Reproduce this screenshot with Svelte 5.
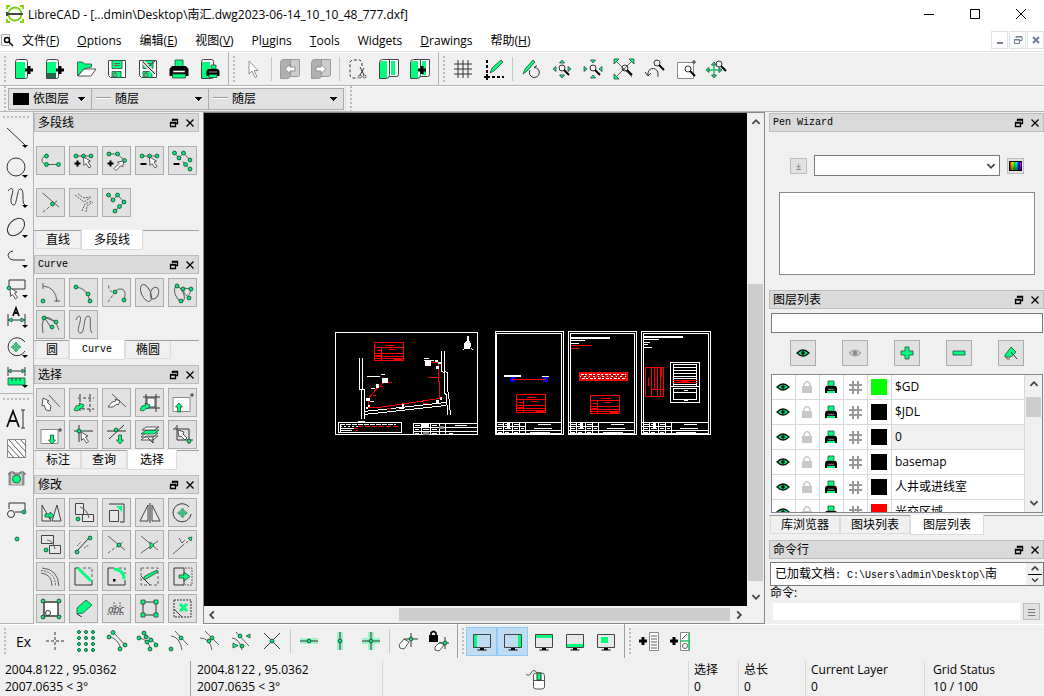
<script>
	const ln = (d, cls = "") => `<path class="ln ${cls}" d="${d}"/>`;
	const shape = (cls, d) => `<path class="${cls}" d="${d}"/>`;
	const dots = (...pts) =>
		pts.map(([x, y]) => `<circle class="dot" cx="${x}" cy="${y}" r="1.9"/>`).join("");
	const ring = (x, y, r, cls = "") =>
		`<circle class="ln ${cls}" cx="${x}" cy="${y}" r="${r}"/>`;
	const cursor = (x, y) => shape("wh", `M${x} ${y}l7 4-2.5 1 3 4.500-2 1.500-3-4.500-2 2z`);
	const cursorUp = (x, y) => shape("wh", `M${x} ${y}l-1.500 6-1.500-1.500-5 5-2-2 5-5-1.500-1.500z`);
	const plus = (x, y, r = 3) => ln(`M${x - r} ${y}h${r * 2}M${x} ${y - r}v${r * 2}`, r > 3 ? "bold" : "thick");
	const minus = (x, y) => ln(`M${x - 3} ${y}h6`, "thick");
	const arrowUp = (x, y) => shape("gr", `M${x} ${y}l3.500 4h-2v5h-3v-5h-2z`);
	const arrowDown = (x, y) => shape("gr", `M${x} ${y}l3.500-4h-2v-5h-3v5h-2z`);
	const moveCross = (x, y) =>
		shape("gm", `M${x} ${y - 5}l2 2.500h-1.200v1.700h1.700v-1.200l2.500 2-2.500 2v-1.200h-1.700v1.700h1.200l-2 2.500-2-2.500h1.200v-1.700h-1.700v1.200l-2.500-2 2.500-2v1.200h1.700v-1.700h-1.200z`);
	const lens = (x, y) => ring(x, y, 3, "dk") + ln(`M${x + 2} ${y + 2}l5 5`, "thick");
	const monitor = (bar) =>
		shape("scr", "M1.500 3.500h17v13h-17z") + bar + shape("bk", "M8 17h4v1.500h2.500v1h-9v-1h2.500z");
	const sheet = shape("doc", "M1.500 2.500q0-2 2-2h8q2 0 2 2v15q0 2-2 2h-10z");
	const floppy =
		shape("doc", "M1.500 1.500h17v17h-15l-2-2z") +
		shape("gr", "M5 1.500h10v8h-10z") +
		ln("M7 4.500h6M7 6.500h6") +
		shape("gr", "M5 12.500h9v6h-9z") +
		shape("doc", "M7 14h2v4h-2z");
	const pages =
		shape("doc", "M8 2.500q0-2 2-2h9.500v15q0 2-2 2h-9.500z") +
		shape("gf", "M12 2h4v14h-4z") +
		shape("doc", "M.500 4q0-3.500 3-3.500h7v15q0 4-3 4h-7z") +
		shape("gf", "M1 4q0-2 2-2h5v17h-7z");
	const greyPages = (arrow) =>
		shape("off2", "M8 2.500q0-2 2-2h9.500v15q0 2-2 2h-9.500z") +
		shape("off", "M.500 4q0-3.500 3-3.500h7v15q0 4-3 4h-7z") +
		shape("wh lt", arrow);
	const zigzag = [[1.5, 2], [6, 7], [10.5, 2], [17, 9], [12.5, 13.5]];

	const icons = {
		// file
		new: sheet + shape("gf", "M2 3h9v16h-9z") + plus(15, 11, 4),
		newTpl: sheet + shape("gf", "M2 3h9v12h-9z") + shape("mid", "M2 14h9v5h-9z") + plus(15, 11, 4),
		open: shape("gr", "M1.500 17v-14h5l2 2h7v3l-8 2z") + shape("wh", "M2 17l6-7h12l-5 7z"),
		save: floppy,
		saveAs: floppy + ln("M5 3l12 12", "halo2") + ln("M5 3l12 12", "dk") + ln("M11 7l6-5", "dk"),
		print: shape("gr", "M6 1h8v7h-8z") + shape("bk", "M3 7h14l2.500 3v7h-19v-7z") + shape("wh", "M4 11.500h12v2h-12z") + shape("gr", "M3.500 15h13v4h-13z"),
		preview: sheet + shape("gf", "M2 3h8v16h-8z") + shape("gr", "M11 6h5v4h-5z") + shape("bk", "M8 10h10l1.500 2v5h-13v-5z") + shape("wh", "M9 12.500h8v1h-8z") + shape("gr", "M9 15.500h8v3h-8z"),
		// edit
		pointer: shape("wh lt", "M6 2v13l3-3 3 6.500 2-1-3-6h4z"),
		undo: greyPages("M5 10l5-4.500v2.500h5v4h-5v2.500z"),
		redo: greyPages("M15 10l-5-4.500v2.500h-5v4h5v2.500z"),
		cut: ln("M14 7v-4l-2-2h-8l-2 2v14l2 2h6", "dk dash") + ln("M12 8l4 8M16 9l-4 7", "dk") + ring(12, 17.5, 1.5) + ring(16.5, 17.5, 1.5),
		copy: pages,
		paste: pages + plus(12, 11, 4),
		// view
		grid: ln("M5 1v18M10 1v18M15 1v18M1 5h18M1 10h18M1 15h18", "dk"),
		draft: ln("M3 1v15", "thick dash") + ln("M3 18h17", "thick dash") + plus(3, 18) + shape("gr", "M6 14l2-5 9-8 2 2-9 9z"),
		redraw: ln("M9 11a5 5 0 104-2.500l3-2", "dk") + shape("gr", "M2 15l2-5 8-9 2 2-8 9z"),
		zoomIn: lens(10, 9) + shape("gr", "M10 1l2.500 3h-5zM10 19l2.500-3h-5zM1 10l3-2.500v5zM19 10l-3-2.500v5z"),
		zoomOut: lens(10, 9) + shape("gr", "M10 4l2.500-3h-5zM10 16l2.500 3h-5zM4 10l-3-2.500v5zM16 10l3-2.500v5z"),
		zoomAuto: ln("M2 2l16 16M18 2l-16 16") + shape("gr", "M0 0h5l-5 5zM20 0v5l-5-5zM0 20v-5l5 5z") + lens(11, 9),
		zoomPrev: lens(12, 4) + ln("M3 17v-3a5 5 0 0110 1v3", "dk") + ln("M0 13l3 4 3-3", "dk"),
		zoomWin: shape("page", "M1.500 3.500h16v16h-16z") + lens(12, 10) + ln("M16 3h4M18 1v4", "dk"),
		zoomPan: ln("M7 4v14M0 11h14", "glm") + shape("gr", "M7 3l2.500 3h-5zM7 19l2.500-3h-5zM-1 11l3-2.500v5zM15 11l-3-2.500v5z") + lens(12, 5),
		// drawing tools
		line: ln("M0 1l19 18", "dk"),
		circle: ring(9, 10, 9, "dk"),
		spline: ln("M1 4c4-5 6-2 4 4s-1 10 2 10 3-18 7-16 0 14 4 16", "dk"),
		ellipse: `<ellipse class="ln dk" cx="9" cy="10" rx="10" ry="7" transform="rotate(-45 9 10)"/>`,
		polyline: ln("M6 4c-7 1-6 8 0 9h12", "dk"),
		select: ln("M2 12v-9h16v9h-13", "dk") + cursor(3, 11) + dots([2, 11]),
		dimension: ln("M1 7v12M18 7v12M1 13h17", "dk") + shape("gr", "M1 13l4-2v4zM18 13l-4-2v4z") + ln("M6 9l3-8 3 8M7 6h4", "dk2"),
		modify: ln("M17 4a9 9 0 10 1 10", "dk") + moveCross(9, 10) + ln("M15 2l3 3", "dk"),
		measure: ln("M1 0v9M18 0v9M1 4h17", "dk") + shape("gr", "M1 4l3-2v4zM18 4l-3-2v4zM1 11h17v7h-17z") + ln("M5 11v3M9 11v3M13 11v3", "dk"),
		text: ln("M0 18l6-16 6 16M3 12h7", "dk2") + ln("M14 1h4M14 19h4M16 1v18", "dk"),
		hatch: shape("page", "M.5 .500h18v18h-18z") + ln("M1 12l6 7M1 6l12 13M2 1l16 18M8 1l11 12M14 1l5 6"),
		camera: shape("off2", "M2 4h15v12h-15z") + ln("M1 5h2v-2h4v2h6v-2h4v2h2M3 5v11M16 5v11") + `<circle class="gr" cx="9.500" cy="10" r="4"/>`,
		block: ln("M2 10v-6h16v9h-10", "dk") + ring(4, 15, 3.5, "dk") + dots([17, 13]),
		point: dots([10, 10]),
		// polylines
		poly: ln("M5.500 5c-6 0-6 8 0 8.500h12") + dots([5.5, 5], [5.5, 13.5], [17.5, 13.5]),
		polyAdd: ln("M2 5h15") + dots([2, 5], [9.5, 5], [17, 5]) + plus(3.5, 12.5) + cursor(9.5, 6),
		polyAppend: ln("M2 3h8.500l7 6.500") + dots([2, 3], [10.5, 3], [17.5, 9.5]) + plus(3.5, 12.5) + cursorUp(17, 10),
		polyDel: ln("M2 5h15") + dots([2, 5], [9.5, 5], [17, 5]) + minus(3.5, 13) + cursor(9.5, 6),
		polyDelBetween: ln("M1.500 2l4.500 5 4.500-5 6.500 7") + ln("M6 7l6.500 6.500 4.500 4.500", "dash") + dots(...zigzag, [17, 18]) + minus(3.5, 13),
		polyTrim: ln("M1.500 0l16.500 14") + ln("M2 19l15-12", "dash") + dots([11.5, 11]),
		polyEq: ln("M1 2l9 7 6-4M4 1l6 4 7-1M8 18l3-7 7-3M12 19l1-6 6-4", "dash2"),
		polySegs: ln("M1.500 2l4.500 5 4.500-5 6.500 7-4.500 4.500L8 18") + dots(...zigzag, [8, 18]),
		// curves
		arc: ln("M2 0v6M2 3q13 1 14 16M13 18h6") + dots([2, 18]),
		arc3: ln("M2 4q11 1 14 14") + dots([2, 4], [14, 11], [16, 18]),
		arcTangent: ln("M8 9q3-4 7-3 5 2 2 11") + ln("M1 19l7-10c-6 0-7-3-6-8", "dash") + dots([8, 9], [17, 17]),
		ellipseArc: `<ellipse class="ln" cx="6" cy="10" rx="4.500" ry="9" transform="rotate(-25 6 10)"/><ellipse class="ln" cx="14.500" cy="10" rx="4" ry="6" transform="rotate(20 14 10)"/>`,
		splinePts: `<ellipse class="ln" cx="6" cy="11" rx="4" ry="8" transform="rotate(-25 6 10)"/>` + ln("M10 5c1 8 6 12 8 1l-8-1") + dots([4, 3], [10, 6], [18, 6], [16, 15], [8, 18]),
		splineFit: ln("M3 2q-3 8-1 16M3 2q11 0 15 13M3 2l8 12M3 2l12 5") + dots([3, 3], [15, 7], [11, 12]),
		freehand: ln("M2 5c2-6 6-5 4 2s-3 11 1 11 2-17 7-17 0 12 4 17"),
		// selection
		deselect: ln("M8 2l11 12") + shape("wh", "M2 5l6 3-2 1 4 4-1 5-4-1-2-5-2 1z"),
		selWin: ln("M4 5h16M6 1v17M16 1v18M3 16h17", "dk dash") + shape("gr", "M0 17l2-4 4-1-1-2 5 2-2 4-1-1-4 3z"),
		selContour: ln("M5 1l14 13") + shape("wh", "M1 14l4-5 4-1-1-2 5 2-2 4-1-1-4 3z"),
		selCross: ln("M3 4h17M6 1v15M16 1v18M3 15h17", "dk") + shape("doc", "M7 5h8v9h-8z") + shape("gr", "M0 17l2-4 4-1-1-2 5 2-2 4-1-1-4 3z"),
		selUp: shape("page", "M0 4.500h17v14h-17z") + arrowUp(6, 10) + ln("M17 2h4M19 0v4", "dk"),
		selDown: shape("page", "M0 4.500h17v14h-17z") + arrowDown(11, 19) + ln("M17 5h4M19 3v4", "dk"),
		selPoint: ln("M5 0v17M0 6h19", "dk") + dots([5, 6]) + cursor(7, 7),
		selLines: ln("M17 0l-15 14M0 6h19", "dk") + dots([9, 5]) + arrowDown(13, 19),
		layers: shape("wh", "M1 15l5-4h12l-5 4zM1 12l5-4h12l-5 4z") + shape("gr", "M1 9l5-4h13l-5 4z") + shape("wh", "M2 5l4-3h13l-5 3z") + ln("M8 13l5 5M13 12v6", "dk"),
		selAll: ln("M4 0v15h16M16 19v-15H0", "dk") + ln("M2 2l14 14") + shape("wh", "M5 5l6 2-1 2 4 4-2 2-4-4-2 1z") + dots([16, 16]),
		// modify
		move: shape("wh0", "M1 2v16h9zM16 2l4 16h-9z") + shape("gr", "M4 11h5v-2l4 3.500-4 3.500v-2h-5z"),
		copyMove: shape("wh0", "M1.500 .500h8v11h-8zM8.500 11.500h11v7h-11z") + ln("M6 4q7 2 9 11") + dots([4, 16]),
		scale: shape("wh0", "M2.500 7.500h9v11h-9z") + ln("M2 1h15v18h-4", "dk") + shape("gf", "M9 3h6v6z"),
		mirror: shape("wh0", "M8 2v16h-8zM12 2l8 16h-8z") + ln("M10 0v20", "dk"),
		rotate: ln("M16 4a9 9 0 10 2 7", "dk") + moveCross(9.5, 10),
		moveRotate: shape("wh0", "M.500 .500h12v8h-12zM8.500 10.500h11v8h-11z") + ln("M6 5q6 0 8 9") + dots([5, 15]),
		stretch: ln("M3 16l12-13", "dk") + dots([3, 17], [16, 3]) + ln("M3 11l4-4M10 13l5-3", "dash2"),
		trim: ln("M1 1l17 14") + ln("M1 18l15-11", "dash") + dots([12, 10]),
		trim2: ln("M1 1l17 14M1 18l17-12") + shape("gr", "M10 7l4 3-4 4z"),
		lengthen: ln("M0 19l9-8") + ln("M9 11l9-7", "dash") + ln("M6 3l3 5 3-3") + shape("gr", "M19 2l-1 4-3-3z"),
		offset: ln("M1 1q16 1 17 18M0 6q11 1 11 13", "") + ln("M0 3.500q14 1 14.500 15", "dash2"),
		bevel: ln("M1 1v17h17v-5M1 1h4", "dk") + ln("M9 1h9v9", "dash") + ln("M4 1l13 13", "glt"),
		round: ln("M1 1v17h17v-5M1 1h6", "dk") + ln("M7 2q10 1 10 10", "glt") + shape("bk", "M6 12h2.500v2.500h-2.500z") + ln("M12 1h6v6", "dash"),
		properties: ln("M1 1v17h17M1 1h17v17", "dash") + ln("M1 9l9 9", "dk") + shape("gr", "M3 12l2-3 12-6 1 2-12 7z"),
		attributes: ln("M1 1h10v17h-10z", "dk") + ln("M12 1h7v17h-7", "dash2") + shape("gr", "M6 8h5v-3l6 4.500-6 4.500v-3h-5z"),
		explodeBlk: shape("doc", "M3 3h14v14h-14z") + ln("M0 3h20M0 17h20M3 0v20M17 0v20", "dk") + ring(7, 14, 2.5, "dk") + dots([2, 2], [18, 2], [2, 18], [18, 18]),
		explodeText: shape("gr", "M3 15v-6l9-8 6 5-9 8z") + ln("M3 15l5 3", "dk"),
		textEdit: `<text class="abc" x="1" y="14">abc</text>` + ln("M0 15h18M7 3v13M13 3v13", "dash2"),
		explode: ln("M3 3h13v13h-13z", "dk") + shape("gr", "M1 1h4v4h-4zM14 1h4v4h-4zM1 14h4v4h-4zM14 14h4v4h-4z"),
		delete: ln("M1 1h17v17h-17z", "dk dash2") + ln("M1 10l8 8", "dk") + ln("M7 5l7 7M14 5l-7 7", "glt"),
		// snapping
		free: ln("M10 1v18M1 10h18", "dk dash"),
		snapGrid: [1, 7, 13, 19].flatMap((y) => [3, 10, 17].map((x) => `<circle class="dot" cx="${x}" cy="${y}" r="1.500"/>`)).join(""),
		snapEnd: ln("M2 6q9 1 12 12M6 1l12 13") + dots([2, 6], [6, 1.5], [18, 14], [13, 18]),
		snapEntity: ln("M1 7q9 1 12 12M5 1l14 13") + dots([1, 7], [6, 2], [8, 6], [13, 9], [9, 11], [18, 14], [12, 18]),
		snapCenter: ln("M2 5q9 1 11 14M6 0l13 14") + dots([2, 18], [12, 7]),
		snapMiddle: ln("M0 7q10 0 12 12M5 0l14 14") + dots([12, 7], [9, 10]),
		snapDist: ln("M1 7q8 1 10 12M5 1l13 14") + dots([9, 5], [11, 15]) + shape("gr", "M19 3v4l-4-2zM2 12v5l5-2.500z"),
		snapInt: ln("M2 2l16 16M18 2l-16 16", "dk") + dots([10, 10]),
		restrH: ln("M1 10h18", "halo") + ln("M1 10h18", "dk") + dots([10, 10]),
		restrV: ln("M10 1v18", "halo") + ln("M10 1v18", "dk") + dots([10, 10]),
		restrO: ln("M1 10h18M10 1v18", "halo") + ln("M1 10h18M10 1v18", "dk") + dots([10, 10]),
		relZero: shape("wh", "M1 14l5-6 5 3-5 7-4-1z") + ln("M13 2v14M6 8h14", "dk") + dots([13, 8]),
		lockZero: shape("bk", "M0 4h9v7h-9z") + ln("M2 4v-2q2.500-3 5 0v2", "dk2") + shape("wh", "M6 16l5-5 4 3-5 6-4-1z") + ln("M16 6v12M10 12h10", "dk") + dots([16, 12]),
		dockLeft: monitor(shape("gf", "M2 4h3v12h-3z")),
		dockRight: monitor(shape("gf", "M15 4h3v12h-3z")),
		dockTop: monitor(shape("gf", "M2 4h16v3h-16z")),
		dockBottom: monitor(shape("gf", "M2 13h16v3h-16z")),
		dockFloat: monitor(shape("gf", "M5 6h7v6h-7z")),
		addMenu: plus(4, 10, 4) + shape("page", "M10.500 1.500h9v18h-9z") + ln("M12 5h6M12 8h6M12 11h6M12 14h6M12 17h6"),
		addTool: plus(4, 10, 4) + shape("page", "M10.500 1.500h9v18h-9z") + ln("M11 10h8M19 2v17", "glm") + ln("M12 8l5-5") + ring(15, 15, 2.5),
		// layers
		eye: shape("eye", "M4 10q6-6 12 0-6 6-12 0z") + `<circle class="bk" cx="10" cy="10" r="1.800"/>`,
		eyeOff: shape("eyeOff", "M4 10q6-6 12 0-6 6-12 0z") + `<circle class="off3" cx="10" cy="10" r="2.200"/>`,
		add: shape("gr", "M8 4h4v4h4v4h-4v4h-4v-4h-4v-4h4z"),
		remove: shape("gr", "M4 8h12v4h-12z"),
		layerEdit: shape("gr", "M4 12l6-8 5 5-5 5h-6z") + ln("M5 14q0 3 4 2") + ln("M10 9l6 7", "dk"),
		lock: shape("off4", "M5 9h10v7h-10z") + ln("M7 9v-2q3-5 6 0v2", "ltl"),
		smallPrint: shape("gr", "M7 4h6v5h-6z") + shape("bk", "M5 9h10l1 2v5h-12v-5z") + shape("wh0", "M7 12h6v1h-6z") + shape("gf", "M6 14h8v2h-8z"),
		hash: ln("M8 4v13M13 4v13M4 8h13M4 13h13", "hash"),
	};

	const fileTools = ["new", "newTpl", "open", "save", "saveAs", "print", "preview"];
	const editTools = ["pointer", "|", "undo", "redo", "|", "cut", "copy", "paste"];
	const viewTools = ["grid", "draft", "|", "redraw", "zoomIn", "zoomOut", "zoomAuto", "zoomPrev", "zoomWin", "zoomPan"];
	const snapTools = ["ex", "free", "snapGrid", "snapEnd", "snapEntity", "snapCenter", "snapMiddle", "snapDist", "snapInt", "|", "restrH", "restrV", "restrO", "|", "relZero", "lockZero"];
	const dockTools = ["dockLeft", "dockRight", "dockTop", "dockBottom", "dockFloat"];
	const creatorTools = ["addMenu", "addTool"];
	const drawTools = ["line", "circle", "spline", "ellipse", "polyline", "select", "dimension", "modify", "measure"];
	const otherTools = ["text", "hatch", "camera", "block", "point"];

	const menus = [
		["文件(", "F", ")"],
		["", "O", "ptions"],
		["编辑(", "E", ")"],
		["视图(", "V", ")"],
		["Pl", "u", "gins"],
		["", "T", "ools"],
		["Widgets", "", ""],
		["", "D", "rawings"],
		["帮助(", "H", ")"],
	];

	const docks = [
		{
			title: "多段线",
			roomy: true,
			tools: ["poly", "polyAdd", "polyAppend", "polyDel", "polyDelBetween", "polyTrim", "polyEq", "polySegs"],
			tabs: ["直线", "多段线"],
			active: "多段线",
		},
		{
			title: "Curve",
			tools: ["arc", "arc3", "arcTangent", "ellipseArc", "splinePts", "splineFit", "freehand"],
			tabs: ["圆", "Curve", "椭圆"],
			active: "Curve",
		},
		{
			title: "选择",
			tools: ["deselect", "selWin", "selContour", "selCross", "selUp", "selDown", "selPoint", "selLines", "layers", "selAll"],
			tabs: ["标注", "查询", "选择"],
			active: "选择",
		},
		{
			title: "修改",
			tools: ["move", "copyMove", "scale", "mirror", "rotate", "moveRotate", "stretch", "trim", "trim2", "lengthen", "offset", "bevel", "round", "properties", "attributes", "explodeBlk", "explodeText", "textEdit", "explode", "delete"],
			tabs: [],
		},
	];

	const layers = [
		{ name: "$GD", color: "#00ff00" },
		{ name: "$JDL", color: "#000000" },
		{ name: "0", color: "#000000", alt: true },
		{ name: "basemap", color: "#000000" },
		{ name: "人井或进线室", color: "#000000" },
		{ name: "光交区域", color: "#ff0000" },
	];

	let pressed = $state(["dockLeft", "dockRight"]);
	let filter = $state("");
	let command = $state("");

	const isLatin = (s) => /^[\x20-\x7e]+$/.test(s);

	function toggle(name) {
		if (!dockTools.includes(name)) return;
		pressed = pressed.includes(name) ? pressed.filter((n) => n !== name) : [...pressed, name];
	}
</script>

{#snippet icon(name)}
	<svg class="icon" viewBox="0 0 20 20" aria-hidden="true">{@html icons[name]}</svg>
{/snippet}

{#snippet toolbar(tools)}
	<div class="toolbar" role="toolbar">
		<span class="grip"></span>
		{#each tools as name}
			{#if name === "|"}
				<span class="sep"></span>
			{:else}
				<button
					class="tool"
					class:pressed={pressed.includes(name)}
					aria-label={name}
					onclick={() => toggle(name)}
				>
					{#if name === "ex"}Ex{:else}{@render icon(name)}{/if}
				</button>
			{/if}
		{/each}
	</div>
{/snippet}

{#snippet dockTitle(title)}
	<header class="dock-title">
		<h2 class:latin={isLatin(title)}>{title}</h2>
		<button aria-label="Float">
			<svg viewBox="0 0 10 10"><path d="M3.500 3V1.500h5v4H7M3 2h6M1.500 4.500h5v4h-5zM1 5h6" /></svg>
		</button>
		<button aria-label="Close">
			<svg viewBox="0 0 10 10"><path d="M1.500 1.500l7 7M8.500 1.500l-7 7" /></svg>
		</button>
	</header>
{/snippet}

{#snippet tabBar(tabs, active)}
	<div class="tabs" role="tablist">
		{#each tabs as tab}
			<button role="tab" aria-selected={tab === active} class:latin={isLatin(tab)}>{tab}</button>
		{/each}
	</div>
{/snippet}

{#snippet chevron(dir)}
	<svg class="chevron {dir}" viewBox="0 0 10 10"><path d="M2 6.500l3-3 3 3" /></svg>
{/snippet}

{#snippet redTable(x, y)}
	<g class="red" transform="translate({x} {y})">
		<path d="M.5 .5h29v18h-29zM0 5.500h30M0 11.500h30M0 14.500h30M0 16.500h30M7.500 5v14M11 3.500h9" />
		<path d="M3 8.500h4M15 7.500h6M2 13.500h5M20 17.500h8" />
	</g>
{/snippet}

{#snippet titleBlock(w)}
	<path d="M1 91.500h{w}M1 95.500h30M1 99.500h{w}M1 102.500h{w}M8.500 91v12M17.500 91v12M24.500 91v12M30.500 91v12" />
	<path d="M3 93.500h5M10 93.500h5M19 93.500h5M3 97.500h4M10 97.500h6M19 97.500h4M26 97.500h3M3 101.500h4M10 101.500h4M19 101.500h4M43 93.500h13M39 97.500h18M35 101.500h20" />
	<path class="solid" d="M12 92h3v6h-3z" />
{/snippet}

<div class="app">
	<header class="titlebar">
		<svg class="logo" viewBox="0 0 18 18" aria-hidden="true">
			<circle cx="9" cy="9" r="6.500" />
			<path class="corner" d="M1 4V1h3M14 1h3v3M17 14v3h-3M4 17H1v-3" />
			<path d="M0 9h17M1 7v4" />
		</svg>
		<h1>LibreCAD - [...dmin\Desktop\南汇.dwg2023-06-14_10_10_48_777.dxf]</h1>
		<div class="window-buttons">
			<button aria-label="Minimize"><svg viewBox="0 0 12 12"><path d="M1 6.500h10" /></svg></button>
			<button aria-label="Maximize"><svg viewBox="0 0 12 12"><path d="M1.500 1.500h9v9h-9z" /></svg></button>
			<button aria-label="Close"><svg viewBox="0 0 12 12"><path d="M1 1l10 10M11 1L1 11" /></svg></button>
		</div>
	</header>

	<nav class="menubar">
		<svg class="file-icon" viewBox="0 0 14 14" aria-hidden="true">
			<path class="sheet" d="M1.500 1.500h8v11h-8z" />
			<circle cx="7" cy="7" r="2.500" />
			<path d="M9 9l4 4" />
		</svg>
		{#each menus as [before, key, after]}
			<button>{before}<u>{key}</u>{after}</button>
		{/each}
		<div class="mdi">
			<button aria-label="Minimize"><svg viewBox="0 0 10 10"><path class="fat" d="M2 8h6" /></svg></button>
			<button aria-label="Restore"><svg viewBox="0 0 10 10"><path d="M3 3V1.500h6v4H7M3 2h6M1.500 4.500h5v4h-5zM1 5h6" /></svg></button>
			<button aria-label="Close"><svg viewBox="0 0 10 10"><path class="fat" d="M2 2l6 6M8 2l-6 6" /></svg></button>
		</div>
	</nav>

	<div class="toolbars">
		{@render toolbar(fileTools)}
		{@render toolbar(editTools)}
		{@render toolbar(viewTools)}
	</div>

	<div class="toolbars pens">
		<span class="grip"></span>
		<label class="pen color">
			<span class="swatch"></span>
			<select aria-label="Color"><option>依图层</option></select>
		</label>
		<label class="pen width">
			<span class="stroke"></span>
			<select aria-label="Width"><option>随层</option></select>
		</label>
		<label class="pen type">
			<span class="stroke"></span>
			<select aria-label="Line type"><option>随层</option></select>
		</label>
		<span class="edge"></span>
		<span class="grip"></span>
	</div>

	<main>
		<aside class="palette">
			<div class="group">
				<span class="grip"></span>
				{#each drawTools as name}
					<button class="drop" aria-label={name}>{@render icon(name)}</button>
				{/each}
			</div>
			<div class="group">
				<span class="grip"></span>
				{#each otherTools as name}
					<button aria-label={name}>{@render icon(name)}</button>
				{/each}
			</div>
		</aside>

		<aside class="left">
			{#each docks as dock}
				<section class="dock">
					{@render dockTitle(dock.title)}
					<div class="tool-grid" class:roomy={dock.roomy}>
						{#each dock.tools as name}
							<button class="boxed" aria-label={name}>{@render icon(name)}</button>
						{/each}
					</div>
					{#if dock.tabs.length}
						{@render tabBar(dock.tabs, dock.active)}
					{/if}
				</section>
			{/each}
		</aside>

		<section class="view">
			<svg class="drawing" viewBox="0 0 543 492" preserveAspectRatio="xMinYMin" shape-rendering="crispEdges">
				<g transform="translate(131 219)">
					<path d="M.5 .5h142v102h-142z" />
					{@render redTable(39, 10)}
					<path class="solid" d="M132 4h2v4l2 4v5h-7v-5l3-4zM127 18l3-3v2zM138 18l-3-3v2z" />
					<path d="M24.500 26v31l2 1v29M27.500 26v31l2 1v29" />
					<path d="M106.500 19v20l3 2v20l2 2 1 20M109.500 19v20l3 2v18l1 2 2 22" />
					<path d="M29 79.500l82-9M29 82.500l82-9" />
					<path class="red" d="M57 50.500h-8l-8 7-7.500 9v9h10l61-9v-17h-1v-19h-8M94 45.500h9M44 54.500h4M38 63.500h3M52 76.500h4M88 71.500h4" />
					<path class="solid" d="M47 46h6v5h-6zM90 29h6v5h-6zM41 52h3v4h-3zM31 66h4v3h-4zM33 73h2v2h-2zM31 75h2v2h-2zM64 75h5v2h-5zM67 72h2v3h-2zM101 68h3v3h-3zM105 65h2v3h-2zM100 28h3v2h-3zM103 30h3v2h-3zM101 34h3v3h-3zM23 89h7v1h-7z" />
					<path d="M32 44.500h13M46 42.500h4M89 26.500h5M89 28.500h10M36 56.500h4M35 69.500h4" />
					<path d="M3.500 90.500h63v10h-63zM5 96.500h14M5 98.500h12M5.500 92v8" />
					<path stroke-dasharray="5 1" d="M5 92.500h56" />
					<path stroke-dasharray="2 2" d="M5 94.500h20" />
					<path class="red" stroke-dasharray="5 2" d="M23 94.500h40M19 96.500h4M21 98.500h2" />
					<path d="M78.500 91v12M78 91.500h64M78 95.500h64M78 99.500h64M86.500 91v12M95.500 91v12M104.500 91v12M110.500 91v12" />
					<path d="M80 93.500h5M88 93.500h6M97 93.500h5M80 97.500h4M88 97.500h6M97 97.500h5M120 93.500h12M80 101.500h4M97 101.500h5M114 101.500h4" />
					<path class="solid" d="M87 92h7v3h-7z" />
					<path class="grey" d="M104 94h5v3h-5zM88 100h6v3h-6z" />
				</g>
				<g transform="translate(291 218)">
					<path d="M.5 .5h68v103h-68zM1.500 2.500h65v101h-65z" />
					<path d="M9 44.500h17M9 45.500h17M47 45.500h7" />
					<path class="blue" d="M15 46h5v5h-5zM48 46h5v5h-5z" />
					<path class="red" d="M17 48.500h34" />
					{@render redTable(21, 63)}
					{@render titleBlock(66)}
				</g>
				<g transform="translate(364 218)">
					<path d="M.5 .5h68v103h-68zM2.500 2.500h64v101h-64z" />
					<path class="solid" d="M3 6h39v2h-39z" />
					<path d="M3 9.500h14M3 12.500h8" />
					<path class="red" d="M3 14.500h21M3 17.500h8" />
					<path class="red strip" d="M11.500 41.500h48v8h-48z" />
					<path stroke-dasharray="3 1 2 2" d="M13 43.500h45M14 47.500h44" />
					<path stroke-dasharray="1 3 2 3" d="M12 45.500h46" />
					<path class="black" stroke-dasharray="2 4 1 3" d="M15 44.500h43M13 46.500h45" />
					{@render redTable(22, 64)}
					{@render titleBlock(66)}
				</g>
				<g transform="translate(437 218)">
					<path d="M.5 .5h69v103h-69zM2.500 2.500h65v101h-65z" />
					<path class="solid" d="M3 5h39v2h-39z" />
					<path d="M3 8.500h15M3 11.500h6M3 13.500h4M3 16.500h8" />
					<path class="red" d="M4.500 36.500h18v29h-18zM10.500 36v30M13.500 36v22M16.500 36v30M19.500 36v30M20.500 36v10M10 58.500h12M7.500 47v8" />
					<path d="M29.500 31.500h29v40h-29zM32.500 33v23M55.500 33v23M32 33.500h24M32 36.500h24M32 39.500h24M32 42.500h24M32 45.500h24M32 47.500h24M32 53.500h24M29 55.500h29M32.500 57.500h23v11h-23zM32 61.500h24M43 59.500h4M43 69.500h4" />
					<path class="red" d="M32 49.500h24M32 51.500h24M40 50.500h8" />
					{@render titleBlock(67)}
				</g>
			</svg>
			<div class="vscroll">
				{@render chevron("up")}
				<div class="track"><span class="thumb"></span></div>
				{@render chevron("down")}
			</div>
			<div class="hscroll">
				{@render chevron("prev")}
				<div class="track"><span class="thumb"></span></div>
				{@render chevron("next")}
			</div>
		</section>

		<aside class="right">
			<section class="dock pen-wizard">
				{@render dockTitle("Pen Wizard")}
				<div class="wizard-row">
					<button class="mini" aria-label="Add favourite">±</button>
					<div class="combo">
						<select aria-label="Pen colour"><option></option></select>
						{@render chevron("down")}
					</div>
					<button class="mini" aria-label="Pick colour"><span class="rainbow"></span></button>
				</div>
				<div class="favourites"></div>
			</section>

			<section class="dock layer-dock">
				{@render dockTitle("图层列表")}
				<input class="filter" aria-label="Filter layers" bind:value={filter} />
				<div class="layer-tools">
					{#each ["eye", "eyeOff", "add", "remove", "layerEdit"] as name}
						<button class="boxed" aria-label={name}>{@render icon(name)}</button>
					{/each}
				</div>
				<div class="layer-list">
					<div class="rows">
						<table>
							<tbody>
								{#each layers as layer}
									<tr>
										<td>{@render icon("eye")}</td>
										<td>{@render icon("lock")}</td>
										<td>{@render icon("smallPrint")}</td>
										<td>{@render icon("hash")}</td>
										<td><span class="chip" style="background: {layer.color}"></span></td>
										<td class="name" class:alt={layer.alt}>{layer.name}</td>
									</tr>
								{/each}
							</tbody>
						</table>
					</div>
					<div class="vscroll slim">
						{@render chevron("up")}
						<div class="track"><span class="thumb"></span></div>
						{@render chevron("down")}
					</div>
				</div>
				{@render tabBar(["库浏览器", "图块列表", "图层列表"], "图层列表")}
			</section>

			<section class="dock command">
				{@render dockTitle("命令行")}
				<div class="output">
					<p>已加载文档<span class="latin">: C:\Users\admin\Desktop\</span>南</p>
					<div class="steps">
						{@render chevron("up")}
						{@render chevron("down")}
					</div>
				</div>
				<label for="command">命令:</label>
				<div class="command-row">
					<input id="command" bind:value={command} />
					<button class="mini" aria-label="Options">☰</button>
				</div>
			</section>
		</aside>
	</main>

	<div class="toolbars bottom">
		{@render toolbar(snapTools)}
		{@render toolbar(dockTools)}
		{@render toolbar(creatorTools)}
	</div>

	<footer>
		<div class="coords">2004.8122 , 95.0362<br />2007.0635 &lt; 3°</div>
		<div class="coords">2004.8122 , 95.0362<br />2007.0635 &lt; 3°</div>
		<div class="mouse">
			<svg viewBox="0 0 20 22" aria-hidden="true">
				<path class="cable" d="M0 6q3 3 5-1 3-5 6 0" />
				<path class="body" d="M7.500 7q0-2 3-2h5q3 0 3 3v11q0 2-3 2h-5q-3 0-3-2zM7.500 12.500h11" />
				<path class="wheel" d="M11 5h4v7h-4z" />
			</svg>
		</div>
		<div class="cell narrow">选择<br />0</div>
		<div class="cell">总长<br />0</div>
		<div class="cell wide">Current Layer<br />0</div>
		<div class="cell last">Grid Status<br />10 / 100</div>
	</footer>
</div>

<style>
	:global(body) {
		background: #f0f0f0;
	}

	.app {
		--line: #b4b4b4;
		--ui: "Open Sans", "Noto Sans CJK SC", sans-serif;
		background: #f0f0f0;
		color: #000;
		display: flex;
		flex-direction: column;
		font: 12px/17px var(--ui);
		height: 100vh;
		min-height: 696px;
		overflow: hidden;
	}

	.app * {
		box-sizing: border-box;
	}

	button,
	select,
	input {
		background: none;
		border: 0;
		border-radius: 0;
		color: inherit;
		font: inherit;
		margin: 0;
		outline: 0;
		padding: 0;
	}

	h1,
	h2,
	p {
		font-size: 12px;
		font-weight: normal;
		margin: 0;
	}

	.latin {
		font-family: "Liberation Mono", monospace;
		font-size: 10px;
	}

	/* icons */
	svg {
		display: block;
		fill: none;
		stroke: #000;
	}

	.icon {
		flex: none;
		height: 20px;
		overflow: visible;
		stroke: none;
		width: 20px;
	}

	.icon :global(.ln) { fill: none; stroke: #606060; }
	.icon :global(.dk) { stroke: #333; }
	.icon :global(.dk2) { stroke: #111; stroke-width: 1.8; }
	.icon :global(.thick) { stroke: #000; stroke-width: 2; }
	.icon :global(.bold) { stroke: #000; stroke-width: 3; }
	.icon :global(.dash) { stroke-dasharray: 3 2; }
	.icon :global(.dash2) { stroke-dasharray: 2 1; }
	.icon :global(.glm) { stroke: #20c070; stroke-width: 1.5; }
	.icon :global(.glt) { stroke: #00ff7f; stroke-width: 3; }
	.icon :global(.halo) { stroke: #a0f5c8; stroke-width: 6; }
	.icon :global(.halo2) { stroke: #ddd; stroke-width: 4; }
	.icon :global(.ltl) { stroke: #c8c8c8; stroke-width: 1.5; }
	.icon :global(.hash) { stroke: #999; stroke-width: 2; }
	.icon :global(.dot) { fill: #00f07a; stroke: #1c5f40; }
	.icon :global(.gr) { fill: #00ff7f; stroke: #2a4a3a; stroke-width: 0.8; }
	.icon :global(.gm) { fill: #30d080; stroke: #2a8a5a; stroke-width: 0.6; }
	.icon :global(.gf) { fill: #00ff7f; }
	.icon :global(.bk) { fill: #000; }
	.icon :global(.mid) { fill: #28664a; }
	.icon :global(.doc) { fill: #fff; stroke: #444; }
	.icon :global(.wh) { fill: #fff; stroke: #444; stroke-width: 0.9; }
	.icon :global(.wh.lt) { stroke: #888; }
	.icon :global(.wh0) { fill: #e8e8e8; stroke: #444; }
	.icon :global(.page) { fill: #fff; stroke: #888; }
	.icon :global(.off) { fill: #b0b0b0; stroke: #999; }
	.icon :global(.off2) { fill: #ccc; stroke: #999; }
	.icon :global(.off3) { fill: #888; }
	.icon :global(.off4) { fill: #c8c8c8; }
	.icon :global(.scr) { fill: #e8e8e8; stroke: #444; }
	.icon :global(.eye) { fill: #00e878; stroke: #111; stroke-width: 1.2; }
	.icon :global(.eyeOff) { fill: #ccc; stroke: #999; }
	.icon :global(.abc) { fill: #444; font: italic 10px "Open Sans", sans-serif; }

	.pressed .icon :global(.scr) { fill: #c0dcf3; }

	.chevron {
		flex: none;
		height: 12px;
		stroke: #444;
		stroke-width: 1.5;
		width: 12px;
	}

	.chevron.down { transform: rotate(180deg); }
	.chevron.prev { transform: rotate(-90deg); }
	.chevron.next { transform: rotate(90deg); }

	/* title and menus */
	.titlebar {
		align-items: center;
		background: #fff;
		display: flex;
		flex: none;
		height: 28px;
		padding-left: 6px;
	}

	.logo {
		height: 18px;
		margin-right: 4px;
		stroke: #444;
		stroke-width: 1.8;
		width: 18px;
	}

	.logo circle,
	.logo .corner {
		stroke: #80d010;
	}

	.window-buttons {
		display: flex;
		margin-left: auto;
	}

	.window-buttons button {
		display: grid;
		height: 28px;
		place-items: center;
		width: 46px;
	}

	.window-buttons svg {
		height: 12px;
		width: 12px;
	}

	.menubar {
		align-items: center;
		background: #fff;
		border-bottom: 1px solid #e4e4e4;
		display: flex;
		flex: none;
		height: 24px;
	}

	.file-icon {
		height: 14px;
		stroke-width: 1.5;
		width: 14px;
	}

	.file-icon .sheet {
		stroke: #aaa;
		stroke-width: 1;
	}

	.menubar > button {
		padding: 1px 10px 0 8px;
	}

	.mdi {
		display: flex;
		gap: 1px;
		margin-left: auto;
	}

	.mdi button {
		border: 1px solid #e0e0e0;
		display: grid;
		height: 18px;
		place-items: center;
		width: 17px;
	}

	.mdi svg {
		height: 10px;
		stroke: #708090;
		width: 10px;
	}

	.fat {
		stroke-width: 2;
	}

	/* toolbars */
	.toolbars {
		border-bottom: 1px solid var(--line);
		box-shadow: inset 0 1px #fff;
		display: flex;
		flex: none;
		height: 34px;
	}

	.toolbar {
		align-items: center;
		border-right: 1px solid var(--line);
		display: flex;
		padding-right: 3px;
	}

	.toolbar:last-child {
		border-color: transparent;
	}

	.grip {
		background: radial-gradient(circle at 1px 1px, #bbb 1px, transparent 1px) 0 0 / 4px 4px;
		flex: none;
		height: 26px;
		margin: 0 1px 0 4px;
		width: 3px;
	}

	.tool {
		display: grid;
		font-size: 14px;
		height: 29px;
		place-items: center;
		width: 31px;
	}

	.pressed {
		background: #c0dcf3;
		border: 1px solid #90c8f6;
	}

	.sep {
		border-left: 1px solid #c8c8c8;
		height: 24px;
		margin: 0 2px 0 3px;
	}

	.pens {
		align-items: center;
		height: 26px;
	}

	.pen {
		align-items: center;
		background: #e1e1e1;
		border: 1px solid #adadad;
		display: flex;
		gap: 4px;
		height: 22px;
		margin-right: -1px;
		padding-left: 4px;
	}

	.pen.color { width: 84px; }
	.pen.width { width: 118px; }
	.pen.type { width: 136px; }

	.pen select {
		appearance: none;
		background-image: linear-gradient(to bottom left, #000 50%, transparent 50%),
			linear-gradient(to bottom right, #000 50%, transparent 50%);
		background-position: right 9px center, right 5px center;
		background-repeat: no-repeat;
		background-size: 4px 4px;
		flex: 1;
		min-width: 0;
	}

	.swatch {
		background: #000;
		height: 12px;
		width: 16px;
	}

	.stroke {
		border-top: 1px solid #fff;
		box-shadow: 0 -1px #999;
		width: 15px;
	}

	.edge {
		align-self: stretch;
		border-right: 1px solid #ddd;
		margin-left: 2px;
	}

	/* work area */
	main {
		display: flex;
		flex: 1;
		min-height: 0;
	}

	.palette {
		border-bottom: 1px solid var(--line);
		border-right: 1px solid var(--line);
		flex: none;
		width: 34px;
	}

	.group {
		border-bottom: 1px solid var(--line);
		padding-bottom: 1px;
	}

	.group + .group {
		border: 0;
	}

	.group .grip {
		display: block;
		height: 3px;
		margin: 4px 3px 3px;
		width: 27px;
	}

	.group button {
		display: grid;
		height: 30px;
		place-items: center;
		position: relative;
		width: 33px;
	}

	.group .drop::after {
		border: 3px solid transparent;
		border-bottom: 0;
		border-top-color: #000;
		bottom: 4px;
		content: "";
		position: absolute;
		right: 5px;
	}

	.left {
		flex: none;
		padding-top: 1px;
		width: 169px;
	}

	.dock-title {
		align-items: center;
		background: #dadada;
		border: 1px solid #bcbcbc;
		display: flex;
		flex: none;
		height: 19px;
		padding-left: 3px;
	}

	.left .dock-title {
		margin-right: 4px;
	}

	.dock-title h2 {
		flex: 1;
	}

	.dock-title h2.latin {
		font-size: 10px;
	}

	.dock-title button {
		display: grid;
		height: 16px;
		place-items: center;
		width: 16px;
	}

	.dock-title svg {
		height: 10px;
		stroke-width: 1.3;
		width: 10px;
	}

	.tool-grid {
		display: grid;
		gap: 3px 4px;
		grid-template-columns: repeat(5, 29px);
		padding: 4px 2px 1px;
	}

	.tool-grid.roomy {
		padding: 14px 2px 13px;
		row-gap: 13px;
	}

	.boxed {
		background: #e1e1e1;
		border: 1px solid #adadad;
		display: grid;
		height: 29px;
		place-items: center;
	}

	.tabs {
		border-top: 1px solid #a0a0a0;
		display: flex;
		height: 20px;
		margin: 0 4px 5px 0;
		padding-left: 1px;
	}

	.tabs button {
		border: 1px solid #dcdcdc;
		border-top: 0;
		height: 18px;
		padding: 0 10px;
	}

	.tabs [aria-selected="true"] {
		background: #fff;
		height: 20px;
		margin-top: -1px;
		padding: 0 12px;
	}

	/* drawing area */
	.view {
		border: 1px solid #828790;
		display: grid;
		flex: 1;
		grid-template: minmax(0, 1fr) 17px / minmax(0, 1fr) 17px;
		min-width: 0;
	}

	.drawing {
		background: #000;
		height: 100%;
		stroke: #fff;
		width: 100%;
	}

	.drawing .red { stroke: #f00; }
	.drawing .strip { fill: #f00; }
	.drawing .black { stroke: #000; }
	.drawing .solid { fill: #fff; stroke: none; }
	.drawing .grey { fill: #888; stroke: none; }
	.drawing .blue { fill: #00f; stroke: none; }

	.vscroll,
	.hscroll {
		align-items: center;
		display: flex;
		gap: 3px;
		justify-content: space-between;
		padding: 2px;
	}

	.vscroll {
		flex-direction: column;
		padding: 3px 0;
	}

	.track {
		display: flex;
		flex: 1;
	}

	.thumb {
		background: #cdcdcd;
	}

	.vscroll .track {
		flex-direction: column;
		width: 15px;
	}

	.hscroll .track {
		align-self: stretch;
	}

	.vscroll .thumb {
		height: 65%;
		margin: auto 0 7px;
	}

	.hscroll .thumb {
		margin-left: auto;
		width: 65%;
	}

	.slim .thumb {
		height: 20px;
		margin: 4px 0 0;
	}

	/* right docks */
	.right {
		display: flex;
		flex: none;
		flex-direction: column;
		padding: 1px 0 0 4px;
		width: 279px;
	}

	.mini {
		background: #e1e1e1;
		border: 1px solid #bcbcbc;
		color: #777;
		display: grid;
		flex: none;
		font-size: 10px;
		height: 16px;
		line-height: 10px;
		place-items: center;
		width: 17px;
	}

	.rainbow {
		background: linear-gradient(to bottom, transparent, #0008), linear-gradient(to right, #f00, #ff0, #0f0, #0ff, #00f, #f0f);
		border: 1px solid #000;
		height: 10px;
		width: 13px;
	}

	.wizard-row {
		align-items: center;
		display: flex;
		gap: 7px;
		padding: 23px 20px 16px 21px;
	}

	.combo {
		align-items: center;
		background: #fff;
		border: 1px solid #7a7a7a;
		display: flex;
		flex: 1;
		height: 21px;
		padding-right: 2px;
	}

	.combo select {
		appearance: none;
		flex: 1;
	}

	.favourites {
		background: #fff;
		border: 1px solid #828790;
		height: 83px;
		margin: 0 9px 15px 10px;
	}

	.layer-dock {
		display: flex;
		flex: 1;
		flex-direction: column;
		min-height: 0;
	}

	.filter {
		background: #fff;
		border: 1px solid #7a7a7a;
		flex: none;
		height: 20px;
		margin: 4px 1px 7px 2px;
	}

	.layer-tools {
		display: flex;
		justify-content: space-between;
		padding: 0 20px 8px 21px;
	}

	.layer-tools .boxed {
		height: 26px;
		width: 26px;
	}

	.layer-list {
		background: #fff;
		border: 1px solid #828790;
		display: flex;
		flex: 1;
		margin: 0 1px 2px 2px;
		min-height: 0;
	}

	.rows {
		flex: 1;
		overflow: hidden;
	}

	.layer-list .vscroll {
		background: #f0f0f0;
		width: 17px;
	}

	table {
		border-collapse: separate;
		border-spacing: 0;
		table-layout: fixed;
		width: 100%;
	}

	td {
		border: 0 solid #d8d8d8;
		border-width: 0 1px 1px 0;
		height: 25px;
		line-height: 16px;
		padding: 0 2px 0 1px;
		width: 24px;
	}

	td.name {
		padding: 0 3px;
		width: auto;
	}

	.alt {
		background: #f0f0f0;
	}

	.chip {
		display: block;
		height: 16px;
		margin: 0 auto;
		width: 16px;
	}

	.right .tabs {
		flex: none;
		margin-right: 0;
	}

	.output {
		align-items: center;
		background: #fff;
		border: 1px solid #7a7a7a;
		display: flex;
		height: 24px;
		justify-content: space-between;
		margin: 3px 0 0 1px;
		padding-left: 4px;
	}

	.steps {
		background: #f0f0f0;
		display: grid;
		width: 17px;
		place-items: center;
	}

	.steps .chevron {
		height: 11px;
		width: 14px;
	}

	.steps .chevron + :global(.chevron) {
		border-bottom: 1px solid #000;
	}

	.command label {
		display: block;
		line-height: 14px;
		padding-left: 1px;
	}

	.command-row {
		display: flex;
		gap: 3px;
		padding: 3px 4px 4px;
	}

	.command-row input {
		background: #fff;
		flex: 1;
		height: 17px;
		min-width: 0;
	}

	.command-row .mini {
		height: 17px;
	}

	.bottom {
		border: 0;
	}

	.bottom .toolbar {
		border-right-color: #a0a0a0;
	}

	.bottom .toolbar:last-child {
		border-color: transparent;
	}

	/* status bar */
	footer {
		display: flex;
		flex: none;
		height: 38px;
		padding-top: 3px;
	}

	.coords {
		border-right: 1px solid #a0a0a0;
		flex: none;
		padding-left: 5px;
		width: 191px;
	}

	.coords + .coords {
		border-color: #d8d8d8;
		padding-left: 6px;
		width: 192px;
	}

	.mouse {
		display: grid;
		flex: 1;
		place-items: center;
	}

	.mouse svg {
		height: 22px;
		width: 20px;
	}

	.cable,
	.body {
		stroke: #555;
	}

	.body {
		fill: #fff;
	}

	.wheel {
		fill: #00ff7f;
		stroke: #333;
	}

	.cell {
		border-left: 1px solid #d8d8d8;
		flex: none;
		padding-left: 5px;
		width: 67px;
	}

	.cell.narrow { width: 50px; }
	.cell.wide { width: 119px; }
	.cell.last { padding-left: 8px; width: 120px; }
</style>
